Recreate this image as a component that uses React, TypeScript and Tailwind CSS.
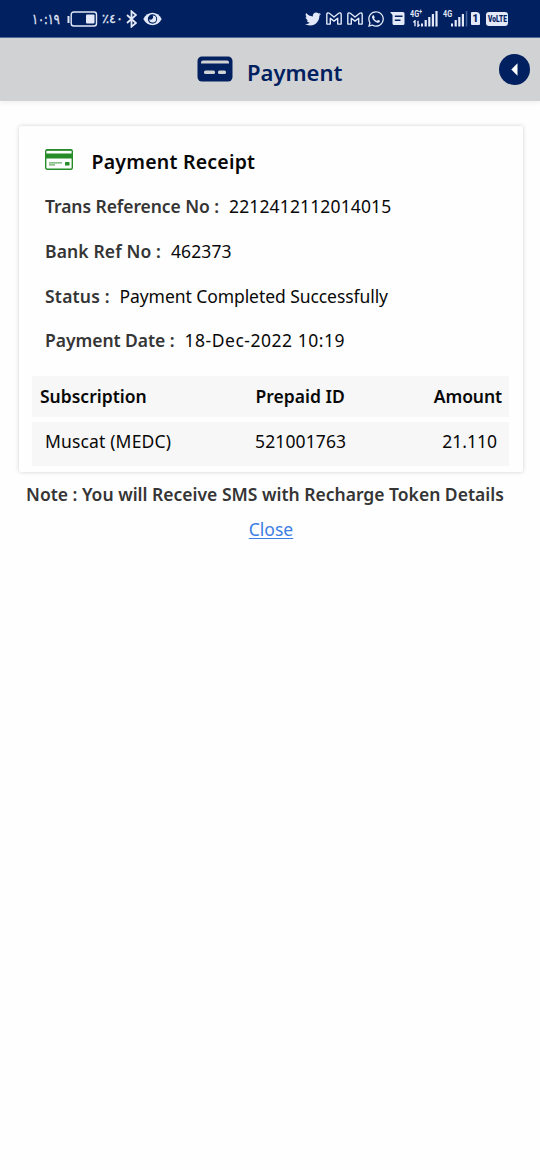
import { FaTwitter, FaWhatsapp } from "react-icons/fa";

const details = [
  { label: "Trans Reference No :", value: "2212412112014015", labelClass: "w-[184px] tracking-[-0.07px]", valueClass: "tracking-[0.14px]" },
  { label: "Bank Ref No :", value: "462373", labelClass: "w-[126px] tracking-[0.13px]", valueClass: "tracking-[0.1px]" },
  { label: "Status :", value: "Payment Completed Successfully", labelClass: "w-[74.5px] tracking-[0.2px]", valueClass: "tracking-[-0.07px]" },
  { label: "Payment Date :", value: "18-Dec-2022 10:19", labelClass: "w-[139.5px] tracking-[-0.05px]", valueClass: "tracking-[0.52px]" },
];

function GmailIcon() {
  return (
    <svg width="16" height="13" viewBox="0 0 16 13" fill="none" stroke="#e3e9f8" strokeWidth="1.4" strokeLinejoin="round">
      <path d="M.8 12.1V2.4C.8.9 2.3.5 3.3 1.3L8 5l4.7-3.7c1-.8 2.5-.4 2.5 1.1v9.7h-3.5V6.2L8 9.1 4.3 6.2v5.9Z" />
    </svg>
  );
}

function StatusBar() {
  return (
    <div className="flex h-[38px] items-center border-b border-[#53699a] bg-[#00205f] pl-[32px] text-[#e3e9f8]" dir="ltr">
      <span className="w-[35px] origin-left scale-x-80 whitespace-nowrap font-['DejaVu_Sans',sans-serif] text-[14px] leading-4 tracking-[-1.9px] [-webkit-text-stroke:0.3px_#e3e9f8]">١٠:١٩</span>
      <svg width="31" height="16" viewBox="0 0 31 16" fill="none">
        <path d="M1.5 5v7" stroke="#e3e9f8" strokeWidth="2" />
        <rect x="4.2" y="1" width="25.3" height="14" rx="2.5" stroke="#e3e9f8" strokeWidth="1.4" />
        <rect x="19" y="3.5" width="8.5" height="9" rx="1" fill="#e3e9f8" />
      </svg>
      <bdo dir="ltr" className="ml-[4px] w-[24px] whitespace-nowrap font-['DejaVu_Sans',sans-serif] text-[13px] leading-4 tracking-[-1px] [-webkit-text-stroke:0.3px_#e3e9f8]">٪٤٠</bdo>
      <svg width="11" height="18" viewBox="0 0 11 18" fill="none" stroke="#e3e9f8" strokeWidth="1.8">
        <path d="M1 5l9 8-4.5 3.7V1.3L10 5l-9 8" />
      </svg>
      <svg className="ml-[6px]" width="19" height="14" viewBox="0 0 19 14">
        <path d="M.3 7C4.5-1.3 14.5-1.3 18.7 7 14.5 15.3 4.5 15.3.3 7Z" fill="#e3e9f8" />
        <circle cx="9.5" cy="7" r="4.7" fill="#00205f" />
        <path d="M9.7 3.5a3.5 3.5 0 1 1-3.5 3.7 2.6 2.6 0 0 0 3.5-3.7Z" fill="#e3e9f8" />
      </svg>

      <FaTwitter className="ml-[143px] h-4 w-4" />
      <div className="ml-[5px] flex gap-[5px]">
        <GmailIcon />
        <GmailIcon />
      </div>
      <FaWhatsapp className="ml-[4px] h-[18px] w-[18px]" />
      <svg className="ml-[5px]" width="15" height="13" viewBox="0 0 15 13" fill="#e3e9f8">
        <path fillRule="evenodd" d="M0 0h13a1.5 1.5 0 0 1 1.5 1.5v10A1.5 1.5 0 0 1 13 13H4a1.5 1.5 0 0 1-1.500-1.500V3ZM4.800 3.500v1.600h7.700V3.500Zm0 3.900V9h5.700V7.400Z" />
      </svg>
      <div className="relative ml-[5px] h-4 w-[29px]">
        <span className="absolute -top-px left-0 origin-left scale-x-80 font-[Roboto,sans-serif] text-[9px] leading-[9px] font-bold">4G<sup className="relative -top-[3px] text-[7px] leading-none">+</sup></span>
        <svg className="absolute top-[9px] left-[3px]" width="7" height="7" viewBox="0 0 7 7" fill="none" stroke="#e3e9f8" strokeWidth="1.4">
          <path d="M.3 2.3 2 .8v5.5M6.7 4.7 5 6.2V.7" />
        </svg>
        <svg className="absolute top-0 left-[11px]" width="17" height="16" viewBox="0 0 17 16" fill="#e3e9f8">
          <rect x="0" y="12.5" width="2" height="3" />
          <rect x="3.6" y="9" width="2.2" height="6.5" />
          <rect x="7.2" y="6" width="2.2" height="9.5" />
          <rect x="10.8" y="3" width="2.2" height="12.5" />
          <rect x="14.4" y="0" width="2.2" height="15.5" />
        </svg>
      </div>
      <div className="relative ml-[4px] h-4 w-[25px]">
        <span className="absolute -top-px left-0 origin-left scale-x-80 font-[Roboto,sans-serif] text-[9px] leading-[9px] font-bold">4G</span>
        <svg className="absolute top-0 left-[8px]" width="17" height="16" viewBox="0 0 17 16" fill="#e3e9f8">
          <rect x="0" y="12.5" width="2" height="3" />
          <rect x="3.6" y="9" width="2.2" height="6.5" />
          <rect x="7.2" y="6" width="2.2" height="9.5" />
          <rect x="10.8" y="3" width="2.2" height="12.5" />
          <rect x="14.8" y="0" width="1.5" height="15.5" fill="#46639c" />
        </svg>
      </div>
      <span className="ml-[3px] flex h-[13px] w-[9px] items-center justify-center rounded-[1px] rounded-tr-[4px] bg-[#e3e9f8] font-[Roboto,sans-serif] text-[10px] font-black text-[#00205f]">1</span>
      <span className="ml-[6px] flex h-[14px] w-[22px] items-center justify-center rounded-[3px] bg-[#e3e9f8] text-[#00205f]">
        <span className="scale-x-70 font-[Roboto,sans-serif] text-[9.5px] leading-none font-black">VoLTE</span>
      </span>
    </div>
  );
}

export default function App() {
  return (
    <div className="min-h-[1170px] w-[540px] bg-[#fefefe] font-['Noto_Sans',sans-serif] text-[17.5px] text-[#080808]">
      <StatusBar />
      <header className="flex h-[63px] items-center bg-[#d1d2d4] shadow-[0_2px_5px_rgba(0,0,0,0.06)]">
        <svg className="mb-[1px] ml-[197px]" width="36" height="26" viewBox="0 0 36 26">
          <rect x="0.5" y="0.5" width="35" height="25" rx="4.5" fill="#00205f" />
          <path d="M4 7.5V6.5a2 2 0 0 1 2-2h24a2 2 0 0 1 2 2v1Z" fill="#d1d2d4" />
          <rect x="7" y="14.5" width="11" height="3.5" rx="1.5" fill="#d1d2d4" />
          <rect x="21" y="14.5" width="8" height="3.5" rx="1.5" fill="#d1d2d4" />
        </svg>
        <h1 className="mt-[6px] ml-[14px] w-[252px] text-[22px] font-semibold text-[#00205f]">Payment</h1>
        <button aria-label="Back" className="flex h-[31px] w-[31px] items-center justify-center rounded-full bg-[#00205f]">
          <svg width="7" height="13" viewBox="0 0 7 13">
            <path d="M6.5.3v12.4L.3 6.5Z" fill="#fff" />
          </svg>
        </button>
      </header>

      <main className="pt-[25px] pr-[17px] pl-[19px]">
        <section className="h-[346px] rounded-[2px] bg-[#fefefe] pt-[14px] pr-[14px] pl-[13px] shadow-[0_0_4px_rgba(0,0,0,0.18)]">
          <div className="flex h-[44px] items-center pl-[13px]">
            <svg className="mb-[5px]" width="28" height="21" viewBox="0 0 28 21">
              <rect x="0.7" y="0.7" width="26.6" height="19.6" rx="1.5" fill="#fdfefd" stroke="#258c27" strokeWidth="1.4" />
              <path d="M1 4.500h26v5H1Z" fill="#258c27" />
              <path d="M1 1.200h26" stroke="#258c27" strokeWidth="1" />
              <path d="M4 13.800h13M4 15.800h6" stroke="#65aa63" strokeWidth="1.2" />
              <rect x="20" y="13" width="4.5" height="3.5" rx=".5" fill="#258c27" />
            </svg>
            <h2 className="ml-[18.5px] text-[19.5px] font-semibold tracking-[0.22px]">Payment Receipt</h2>
          </div>
          <dl className="pl-[13px]">
            {details.map((row) => (
              <div key={row.label} className="flex h-[44.7px] items-center whitespace-nowrap">
                <dt className={`font-semibold text-[#353535] ${row.labelClass}`}>{row.label}</dt>
                <dd className={row.valueClass}>{row.value}</dd>
              </div>
            ))}
          </dl>
          <div className="mt-[13px] flex h-[41px] items-center bg-[#f7f7f7] font-semibold">
            <span className="pl-[8px]">Subscription</span>
            <span className="ml-auto pr-[89px]">Prepaid ID</span>
            <span className="pr-[7px] tracking-[-0.1px]">Amount</span>
          </div>
          <div className="mt-[5px] flex h-[44px] items-center bg-[#f7f7f7] pb-[5px]">
            <span className="pl-[13px] tracking-[0.15px]">Muscat (MEDC)</span>
            <span className="ml-auto pr-[96px] tracking-[0.12px]">521001763</span>
            <span className="pr-[12px]">21.110</span>
          </div>
        </section>
        <p className="mt-[9px] ml-[7px] leading-[26px] font-semibold whitespace-nowrap text-[#353535]">
          Note : You will Receive SMS with Recharge Token Details
        </p>
        <div className="mt-[9px] text-center leading-[26px]">
          <a href="#" className="text-[#3b7fe5] underline underline-offset-2">Close</a>
        </div>
      </main>
    </div>
  );
}
